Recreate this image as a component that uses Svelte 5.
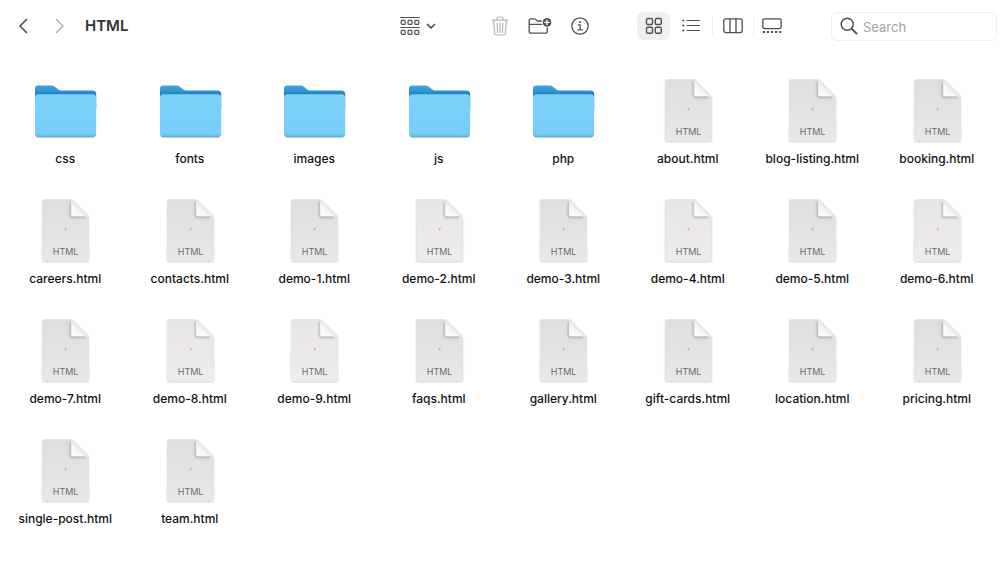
<script>
  const folders = ['css', 'fonts', 'images', 'js', 'php'];
  const files = [
    'about', 'blog-listing', 'booking', 'careers', 'contacts', 'demo-1', 'demo-2', 'demo-3',
    'demo-4', 'demo-5', 'demo-6', 'demo-7', 'demo-8', 'demo-9', 'faqs', 'gallery',
    'gift-cards', 'location', 'pricing', 'single-post', 'team'
  ];
  const warm = ['demo-2', 'demo-4', 'demo-6', 'demo-8', 'demo-9'];
  const items = [
    ...folders.map((name) => ({ name, folder: true, warm: false })),
    ...files.map((name) => ({ name: name + '.html', folder: false, warm: warm.includes(name) }))
  ];
  let query = $state('');
</script>

<svg class="defs" aria-hidden="true">
  <defs>
    <linearGradient id="paper" x1="0" y1="0" x2="0" y2="1">
      <stop offset="0" stop-color="#dededf" />
      <stop offset="0.5" stop-color="#e3e3e4" />
      <stop offset="1" stop-color="#e8e8e9" />
    </linearGradient>
    <linearGradient id="paper-warm" x1="0" y1="0" x2="0" y2="1">
      <stop offset="0" stop-color="#e7e6e4" />
      <stop offset="0.5" stop-color="#ebeae9" />
      <stop offset="1" stop-color="#eeeded" />
    </linearGradient>
    <linearGradient id="fold" x1="0" y1="1" x2="0.6" y2="0.4">
      <stop offset="0" stop-color="#ffffff" />
      <stop offset="0.6" stop-color="#f5f5f5" />
      <stop offset="1" stop-color="#d8d8d9" />
    </linearGradient>
    <linearGradient id="front" x1="0" y1="0" x2="0" y2="1">
      <stop offset="0" stop-color="#7bd1f9" />
      <stop offset="0.9" stop-color="#76cef9" />
      <stop offset="0.96" stop-color="#67bce8" />
      <stop offset="1" stop-color="#5aa6cf" />
    </linearGradient>
    <linearGradient id="back" x1="0" y1="0" x2="0" y2="1">
      <stop offset="0" stop-color="#43a4da" />
      <stop offset="0.22" stop-color="#3097d2" />
      <stop offset="0.36" stop-color="#1d83c3" />
    </linearGradient>
    <filter id="soft" x="-20%" y="-20%" width="140%" height="140%">
      <feGaussianBlur stdDeviation="0.9" />
    </filter>
  </defs>
</svg>

<main>
  <header>
    <nav aria-label="History">
      <button aria-label="Back">
        <svg width="10" height="16" viewBox="0 0 10 16"><path d="M8.5 1.5 L2 8 L8.5 14.5" stroke-width="1.7" /></svg>
      </button>
      <button class="forward" aria-label="Forward" disabled>
        <svg width="10" height="16" viewBox="0 0 10 16"><path d="M1.5 1.5 L8 8 L1.5 14.5" stroke-width="1.4" /></svg>
      </button>
      <h1>HTML</h1>
    </nav>

    <button class="arrange" aria-label="Group items">
      <svg width="20" height="20" viewBox="0 0 20 20">
        <path d="M0.7 1.5H19.3M0.7 11.5H19.3" stroke-width="1.2" />
        <g stroke-width="1.2">
          <rect x="1.2" y="4.4" width="4" height="4" rx="1" /><rect x="8" y="4.4" width="4" height="4" rx="1" /><rect x="14.8" y="4.4" width="4" height="4" rx="1" />
          <rect x="1.2" y="14.4" width="4" height="4" rx="1" /><rect x="8" y="14.4" width="4" height="4" rx="1" /><rect x="14.8" y="14.4" width="4" height="4" rx="1" />
        </g>
      </svg>
      <svg width="10" height="8" viewBox="0 0 10 8"><path d="M1.5 2.5L5 6L8.5 2.5" stroke-width="1.7" /></svg>
    </button>

    <div class="actions">
      <button class="trash" aria-label="Delete" disabled>
        <svg width="18" height="20" viewBox="0 0 18 20" stroke-width="1.2">
          <path d="M1 4.2H17M6 4V2.2Q6 1 7.2 1H10.8Q12 1 12 2.2V4M2.6 4.4L3.6 17.5Q3.8 19 5.2 19H12.8Q14.2 19 14.4 17.5L15.4 4.4M6.2 7L6.6 16.4M9 7V16.4M11.8 7L11.4 16.4" />
        </svg>
      </button>
      <button aria-label="New folder">
        <svg width="24" height="18" viewBox="0 0 24 18" stroke-width="1.3">
          <path d="M13.4 4H9.4L7.8 2.4Q7.2 1.8 6.4 1.8H3Q1.2 1.8 1.2 3.6V14.2Q1.2 16.2 3.2 16.2H17.3Q19.3 16.2 19.3 14.2V11M1.2 7.3H13.6" />
          <circle cx="19" cy="5.4" r="4.3" class="solid" stroke="none" />
          <path d="M19 3.2V7.6M16.8 5.4H21.2" class="plus" />
        </svg>
      </button>
      <button aria-label="Get info">
        <svg width="18" height="18" viewBox="0 0 18 18" stroke-width="1.3">
          <circle cx="9" cy="9" r="8.2" />
          <path d="M7.2 7.8H9.2V12.8M6.9 12.9H11.4" />
          <circle cx="9" cy="5" r="1.1" class="solid" stroke="none" />
        </svg>
      </button>
    </div>

    <div class="views">
      <button class="selected" aria-label="Icon view" aria-pressed="true">
        <svg width="18" height="18" viewBox="0 0 18 18" stroke-width="1.4">
          <rect x="1.5" y="1.5" width="6" height="6" rx="1.3" /><rect x="10.3" y="1.5" width="6" height="6" rx="1.3" />
          <rect x="1.5" y="10.2" width="6" height="6" rx="1.3" /><rect x="10.3" y="10.2" width="6" height="6" rx="1.3" />
        </svg>
      </button>
      <button aria-label="List view">
        <svg width="18" height="14" viewBox="0 0 18 14" stroke-width="1.2">
          <path d="M5 1.5H17.4M5 6.5H17.4M5 11.5H17.4" />
          <g class="solid" stroke="none"><circle cx="1.3" cy="1.5" r="1.1" /><circle cx="1.3" cy="6.5" r="1.1" /><circle cx="1.3" cy="11.5" r="1.1" /></g>
        </svg>
      </button>
      <button aria-label="Column view">
        <svg width="20" height="16" viewBox="0 0 20 16" stroke-width="1.3">
          <rect x="0.8" y="0.8" width="18.4" height="13.8" rx="2" /><path d="M7 1V14.4M13 1V14.4" />
        </svg>
      </button>
      <button aria-label="Gallery view">
        <svg width="20" height="16" viewBox="0 0 20 16" stroke-width="1.3">
          <rect x="0.8" y="0.8" width="18.4" height="9.8" rx="1.8" />
          <path d="M0.8 14H19.6" stroke-width="2" stroke-dasharray="2.2 1.9" class="dots" />
        </svg>
      </button>
    </div>

    <label class="search">
      <svg width="18" height="18" viewBox="0 0 18 18" stroke-width="1.4">
        <circle cx="7.2" cy="7.2" r="6" /><path d="M11.6 11.6L16.6 16.6" stroke-width="1.9" />
      </svg>
      <input type="search" placeholder="Search" aria-label="Search" bind:value={query} />
    </label>
  </header>

  <ul>
    {#each items as item (item.name)}
      <li>
        {#if item.folder}
          <svg class="icon" width="64" height="64" viewBox="0 0 64 64" aria-hidden="true">
            <path d="M2 12V9.8Q2 6.6 5.4 6.6H17.8Q20.4 6.6 22.2 8L25 10.2Q26.4 11.4 28.4 11.4H59.4Q63.2 11.4 63.2 15V30H2Z" fill="url(#back)" />
            <path d="M2 18.9Q2 15.3 5.6 15.3H59.6Q63.2 15.3 63.2 18.9V54.4Q63.2 58.4 59.2 58.4H6Q2 58.4 2 54.4Z" fill="url(#front)" />
          </svg>
        {:else}
          <svg class="icon" width="64" height="64" viewBox="0 0 64 64" aria-hidden="true">
            <path d="M11 1H38.6L55.4 18V61.6Q55.4 63 54 63H11Q9.6 63 9.6 61.6V2Q9.6 1 11 1Z" fill="#888" opacity="0.5" filter="url(#soft)" />
            <path d="M11 0.4H38.2L55.4 17.6V61Q55.4 62.4 54 62.4H11Q9.6 62.4 9.6 61V2Q9.6 0.4 11 0.4Z" fill={item.warm ? 'url(#paper-warm)' : 'url(#paper)'} />
            <path d="M37.6 3V15.6Q37.6 18 40 18H52" fill="none" stroke="#666" stroke-width="1.3" opacity="0.6" filter="url(#soft)" />
            <path d="M38.2 0.4L55.2 17.2H39.8Q38.2 17.2 38.2 15.6Z" fill="url(#fold)" />
            <path d="M31.6 29.4H33.2L32.5 31.6" fill="none" stroke="#dc9298" stroke-width="0.9" />
            <text x="32.6" y="56.4" text-anchor="middle">HTML</text>
          </svg>
        {/if}
        <span>{item.name}</span>
      </li>
    {/each}
  </ul>
</main>

<style>
  :global(body) { margin: 0; background: #fff; }
  main { font-family: Inter, "Liberation Sans", sans-serif; color: #111; }
  .defs { position: absolute; width: 0; height: 0; }
  header { display: flex; align-items: center; height: 52px; padding: 0 3px 0 18px; box-sizing: border-box; }
  button { display: flex; align-items: center; justify-content: center; padding: 0; border: 0; background: none; color: #505050; }
  header svg { display: block; flex: none; fill: none; stroke: currentColor; stroke-linecap: round; stroke-linejoin: round; }
  .solid { fill: currentColor; }
  .plus { stroke: #fff; }
  .dots { stroke-linecap: butt; }
  nav { display: flex; align-items: center; flex: 1; }
  .forward { margin-left: 27px; color: #adadad; }
  h1 { margin: 0 0 0 20px; font-size: 15px; line-height: 20px; font-weight: 600; color: #333; }
  .arrange { gap: 6px; margin-right: 55px; }
  .actions { display: flex; align-items: center; gap: 19px; margin-right: 48px; }
  .trash { color: #b5b5b5; }
  .views { display: flex; align-items: center; margin-right: 41px; }
  .views button { height: 20px; width: 41px; box-sizing: border-box; border-left: 1px solid #f0f0f0; }
  .views button:nth-child(2) { width: 42px; border-left: 0; }
  .views button:last-child { width: 37px; }
  .views .selected { height: 28px; width: 33px; border: 0; border-radius: 6px; background: #f0f0f0; }
  .search { display: flex; align-items: center; gap: 5px; width: 166px; height: 29px; padding: 0 8px; box-sizing: border-box; border: 1px solid #efefef; border-radius: 6px; color: #4b4b4b; }
  input { flex: 1; min-width: 0; padding: 1px 0 0; border: 0; outline: 0; background: none; font: 13px/20px Inter, "Liberation Sans", sans-serif; color: #333; }
  input::placeholder { color: #a3a3a3; opacity: 1; }
  ul { display: grid; grid-template-columns: repeat(8, minmax(0, 1fr)); grid-auto-rows: 90px; row-gap: 30px; margin: 0; padding: 27px 1px 24px 3px; list-style: none; }
  li { display: flex; flex-direction: column; align-items: center; gap: 6px; }
  li span { font-size: 12px; line-height: 20px; font-weight: 500; white-space: nowrap; }
  .icon { display: block; }
  .icon text { font: 9px Inter, "Liberation Sans", sans-serif; fill: #6c6c6c; }
</style>
